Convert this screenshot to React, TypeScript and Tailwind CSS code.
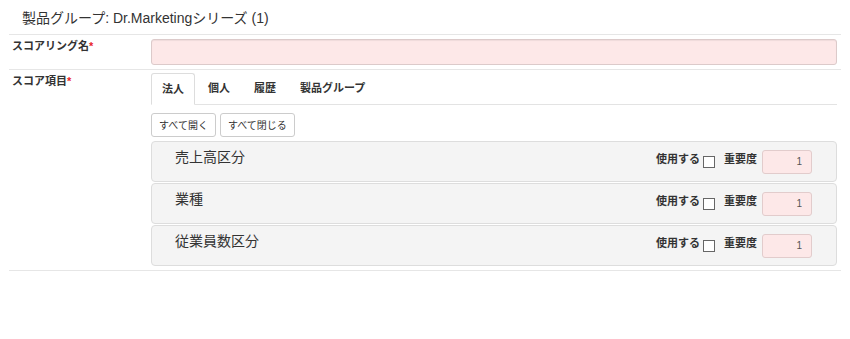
import { useState } from 'react';

const tabs = ['法人', '個人', '履歴', '製品グループ'];
const items = ['売上高区分', '業種', '従業員数区分'];

function ScoreItem({ title }: { title: string }) {
  const [used, setUsed] = useState(false);

  return (
    <div className="h-[41px] mt-px first:mt-0 bg-[#f4f4f4] border border-[#dddddd] rounded-[4px] flex items-start justify-between pl-[23px] pr-[24px]">
      <div className="pt-[6px] text-[14px] leading-[18px] text-[#333]">{title}</div>
      <div className="self-center flex items-center">
        <span className="text-[11px] font-bold text-[#333] mb-[5px]">使用する</span>
        <button
          onClick={() => setUsed(!used)}
          className="ml-[3px] w-[12px] h-[12px] bg-white border border-[#666] flex items-center justify-center text-[9px] leading-none"
        >
          {used ? '✓' : ''}
        </button>
        <span className="ml-[9px] text-[11px] font-bold text-[#333] mb-[5px]">重要度</span>
        <input
          defaultValue="1"
          className="ml-[5px] w-[50px] h-[24px] bg-[#fde8e8] border border-[#e2cccc] rounded-[3px] text-right pr-[9px] text-[10px] text-[#555] outline-none"
        />
      </div>
    </div>
  );
}

export default function App() {
  const [active, setActive] = useState(0);

  return (
    <div className="w-[850px] h-[339px] bg-white text-[#333] font-['Liberation_Sans','Noto_Sans_CJK_JP',sans-serif]">
      {/* タイトル */}
      <div className="h-[34px] pl-[22px] pt-[8px] text-[14px] leading-[20px]">
        製品グループ: Dr.Marketingシリーズ (1)
      </div>

      <div className="mx-[9px] border-t border-[#e6e6e6]">
        {/* スコアリング名 */}
        <div className="flex border-b border-[#e6e6e6]">
          <div className="w-[142px] pl-[3px] pt-[3px] text-[11px] leading-[16px] font-bold">
            スコアリング名<span className="text-[#e8242a]">*</span>
          </div>
          <input className="flex-1 mr-[4px] my-[4px] h-[26px] bg-[#fde8e8] border border-[#dccaca] rounded-[3px] shadow-[inset_0_1px_1px_rgba(0,0,0,0.06)] outline-none px-2 text-[12px]" />
        </div>

        {/* スコア項目 */}
        <div className="flex border-b border-[#e6e6e6]">
          <div className="w-[142px] pl-[3px] pt-[3px] text-[11px] leading-[16px] font-bold">
            スコア項目<span className="text-[#e8242a]">*</span>
          </div>
          <div className="flex-1 mr-[4px] pt-[3px] pb-[4px]">
            <div className="flex h-[32px] border-b border-[#e3e3e3]">
              {tabs.map((t, i) => (
                <button
                  key={t}
                  onClick={() => setActive(i)}
                  className={
                    i === active
                      ? 'h-[32px] px-[10px] mr-[2px] bg-white border border-[#dddddd] border-b-white rounded-t-[3px] text-[11px] font-bold text-[#333]'
                      : 'h-[31px] px-[10px] mr-[2px] border border-transparent text-[11px] font-bold text-[#333]'
                  }
                >
                  {t}
                </button>
              ))}
            </div>

            <div className="mt-[8px] flex gap-[4px]">
              <button className="h-[24px] px-[7px] bg-white border border-[#cccccc] rounded-[3px] text-[10px] text-[#333]">
                すべて開く
              </button>
              <button className="h-[24px] px-[7px] bg-white border border-[#cccccc] rounded-[3px] text-[10px] text-[#333]">
                すべて閉じる
              </button>
            </div>

            <div className="mt-[4px]">
              {items.map((it) => (
                <ScoreItem key={it} title={it} />
              ))}
            </div>
          </div>
        </div>
      </div>
    </div>
  );
}
